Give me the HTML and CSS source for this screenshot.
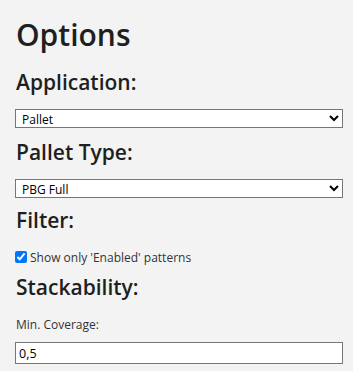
FILE: index.html
```html
<!DOCTYPE html>
<html lang="en">
<head>
    <meta charset="UTF-8">
    <title>Options</title>
    <link rel="stylesheet" href="styles.css">
</head>
<body>
    <div class="container">
        <h1>Options</h1>

        <!-- Application -->
        <h2>Application:</h2>
        <select id="application" class="field">
            <option value="pallet">Pallet</option>
            <option value="box">Box</option>
        </select>

        <!-- Pallet type -->
        <h2>Pallet Type:</h2>
        <select id="pallet-type" class="field">
            <option value="pbg-full">PBG Full</option>
            <option value="pbg-half">PBG Half</option>
        </select>

        <!-- Filter -->
        <h2 class="filter">Filter:</h2>
        <label class="check"><input type="checkbox" id="only-enabled" checked> Show only 'Enabled' patterns</label>

        <!-- Stackability -->
        <h2 class="stack">Stackability:</h2>
        <label for="min-coverage" class="caption">Min. Coverage:</label>
        <input type="text" id="min-coverage" class="field text" value="0,5">
    </div>
</body>
</html>
```

FILE: styles.css
```css
body {
    font-family: "Open Sans", "Noto Sans", sans-serif;
    margin: 0;
    padding: 0;
    background: #f3f3f3;
    color: #222;
}
.container {
    padding: 17px 10px 0 15px;
}
h1 {
    font-size: 30px;
    font-weight: 600;
    line-height: 36px;
    margin: 0 0 15px 1px; /* collapses with the h2 top margin */
    color: #1f1f1f;
}
h2 {
    font-size: 21px;
    font-weight: 600;
    line-height: 28px;
    margin: 10px 0 13px 1px;
    color: #1f1f1f;
}
h2.filter {
    margin: 8px 0 15px 1px;
}
h2.stack {
    margin: 8px 0 16px 1px;
}
.field {
    display: block;
    width: 100%;
    box-sizing: border-box;
    font-family: "Open Sans", "Noto Sans", sans-serif;
    font-size: 12px;
    height: 19px;
    padding: 0 2px;
    border: 1px solid #767676;
    border-radius: 0;
    background: #fff;
    color: #000;
}
.text {
    height: 22px;
    font-size: 12.5px;
    padding: 0 3px;
}
.check {
    display: flex;
    align-items: center;
    gap: 3px;
    height: 16px;
    font-size: 12px;
    color: #333;
}
.check input {
    margin: 0;
    width: 12px;
    height: 12px;
    accent-color: #0075ff;
}
.caption {
    display: block;
    font-size: 12px;
    line-height: 16px;
    color: #333;
    margin: 0 0 9px 1px;
}
```
